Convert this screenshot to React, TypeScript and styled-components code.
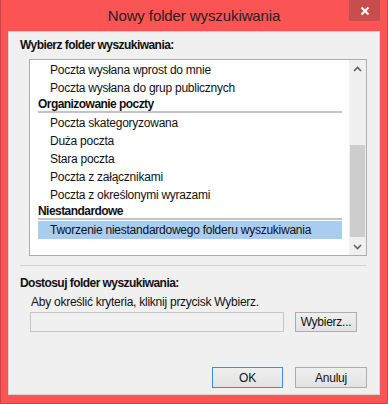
import React from "react";
import styled, { createGlobalStyle } from "styled-components";

const Global = createGlobalStyle`
  html, body { margin: 0; padding: 0; background: #fb5454; }
  body { font-family: "Liberation Sans", Arial, sans-serif; }
`;

const Window = styled.div`
  width: 388px;
  height: 404px;
  box-sizing: border-box;
  background: #fb5454;
  border: 1px solid #c44646;
  border-top: none;
  padding: 0 7px 8px 7px;
  display: flex;
  flex-direction: column;
`;

const TitleBar = styled.div`
  height: 31px;
  flex: none;
  display: grid;
  grid-template-columns: 1fr auto 1fr;
  align-items: start;
`;

const Title = styled.div`
  grid-column: 2;
  font-size: 15px;
  line-height: 15px;
  margin-top: 8px;
  color: #2a2020;
  letter-spacing: -0.1px;
  white-space: nowrap;
`;

const CloseButton = styled.div`
  grid-column: 3;
  justify-self: end;
  width: 31px;
  height: 21px;
  background: #c84e4e;
  display: flex;
  align-items: center;
  justify-content: center;
`;

const Client = styled.div`
  flex: 1;
  background: #f0f0f0;
  border: 1px solid #d6d6d6;
  display: flex;
  flex-direction: column;
  overflow: hidden;
`;

const SectionLabel = styled.div<{ $top: number }>`
  margin: ${(p) => p.$top}px 0 0 11px;
  font-size: 12px;
  line-height: 15px;
  font-weight: bold;
  letter-spacing: -0.55px;
  color: #111;
`;

const ListBox = styled.div`
  margin: 6px 0 0 20px;
  width: 338px;
  height: 197px;
  box-sizing: border-box;
  border: 1px solid #abadb3;
  background: #fff;
  display: flex;
`;

const ListContent = styled.div`
  flex: 1;
  padding: 1px 7px 0 8px;
  display: flex;
  flex-direction: column;
`;

const GroupHeader = styled.div`
  font-size: 12px;
  line-height: 14px;
  font-weight: bold;
  letter-spacing: -0.55px;
  color: #111;
  border-bottom: 2px solid #c4c4c4;
  margin-bottom: 1px;
`;

const Item = styled.div<{ $selected?: boolean }>`
  height: 18px;
  line-height: 18px;
  padding-left: 12px;
  font-size: 12px;
  letter-spacing: -0.25px;
  color: #111;
  white-space: nowrap;
  background: ${(p) => (p.$selected ? "#a9ccf1" : "transparent")};
`;

const ScrollBar = styled.div`
  width: 17px;
  background: #f0f0f0;
  display: flex;
  flex-direction: column;
`;

const ScrollArrow = styled.div`
  height: 17px;
  display: flex;
  align-items: center;
  justify-content: center;
`;

const ScrollTrack = styled.div`
  flex: 1;
  display: flex;
  flex-direction: column;
  justify-content: flex-end;
`;

const Thumb = styled.div`
  height: 92px;
  margin: 0 1px 1px 1px;
  background: #cdcdcd;
`;

const Separator = styled.div`
  margin: 9px 13px 0 11px;
  border-top: 1px solid #d0d0d0;
`;

const Hint = styled.div`
  margin: 4px 0 0 22px;
  font-size: 12px;
  line-height: 15px;
  letter-spacing: -0.25px;
  color: #111;
`;

const InputRow = styled.div`
  margin: 2px 0 0 21px;
  display: flex;
  gap: 11px;
`;

const TextInput = styled.div`
  width: 254px;
  height: 20px;
  box-sizing: border-box;
  border: 1px solid #c6c6c6;
  background: #f0f0f0;
`;

const Button = styled.div<{ $w: number; $h: number; $focused?: boolean }>`
  width: ${(p) => p.$w}px;
  height: ${(p) => p.$h}px;
  box-sizing: border-box;
  border: 1px solid ${(p) => (p.$focused ? "#3c8fe6" : "#adadad")};
  background: linear-gradient(#efefef, #e3e3e3);
  display: flex;
  align-items: center;
  justify-content: center;
  font-size: 12px;
  letter-spacing: -0.25px;
  color: #111;
`;

const Footer = styled.div`
  margin-top: 35px;
  padding-right: 12px;
  display: flex;
  justify-content: flex-end;
  gap: 12px;
`;

const Chevron = ({ up }: { up?: boolean }) => (
  <svg width="9" height="6" viewBox="0 0 9 6">
    <path
      d={up ? "M1 5 L4.5 1.5 L8 5" : "M1 1 L4.5 4.5 L8 1"}
      fill="none"
      stroke="#606060"
      strokeWidth="1.6"
    />
  </svg>
);

export default function App() {
  return (
    <>
      <Global />
      <Window>
        <TitleBar>
          <Title>Nowy folder wyszukiwania</Title>
          <CloseButton>
            <svg width="10" height="10" viewBox="0 0 10 10">
              <path d="M1.5 1.5 L8.5 8.5 M8.5 1.5 L1.5 8.5" stroke="#fff" strokeWidth="2" />
            </svg>
          </CloseButton>
        </TitleBar>
        <Client>
          <SectionLabel $top={6}>Wybierz folder wyszukiwania:</SectionLabel>
          <ListBox>
            <ListContent>
              <Item>Poczta wysłana wprost do mnie</Item>
              <Item>Poczta wysłana do grup publicznych</Item>
              <GroupHeader>Organizowanie poczty</GroupHeader>
              <Item>Poczta skategoryzowana</Item>
              <Item>Duża poczta</Item>
              <Item>Stara poczta</Item>
              <Item>Poczta z załącznikami</Item>
              <Item>Poczta z określonymi wyrazami</Item>
              <GroupHeader>Niestandardowe</GroupHeader>
              <Item $selected>Tworzenie niestandardowego folderu wyszukiwania</Item>
            </ListContent>
            <ScrollBar>
              <ScrollArrow>
                <Chevron up />
              </ScrollArrow>
              <ScrollTrack>
                <Thumb />
              </ScrollTrack>
              <ScrollArrow>
                <Chevron />
              </ScrollArrow>
            </ScrollBar>
          </ListBox>
          <Separator />
          <SectionLabel $top={10}>Dostosuj folder wyszukiwania:</SectionLabel>
          <Hint>Aby określić kryteria, kliknij przycisk Wybierz.</Hint>
          <InputRow>
            <TextInput />
            <Button $w={62} $h={20}>Wybierz...</Button>
          </InputRow>
          <Footer>
            <Button $w={71} $h={21} $focused>OK</Button>
            <Button $w={72} $h={21}>Anuluj</Button>
          </Footer>
        </Client>
      </Window>
    </>
  );
}
